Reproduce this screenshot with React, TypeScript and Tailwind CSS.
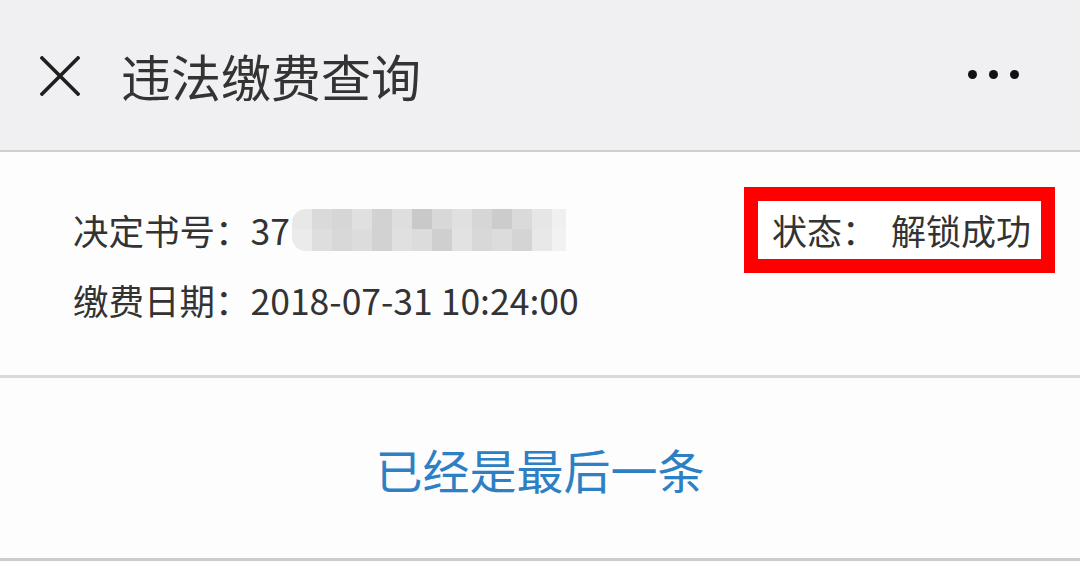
const font = { fontFamily: '"Noto Sans CJK SC", "Noto Sans", sans-serif' }

const mosaicTop = ['#e8e8e8', '#dadada', '#d6d6d6', '#e0e0e0', '#d2d2d2', '#dedede', '#c9c9c9', '#d8d8d8', '#e0e0e0', '#d6d6d6', '#cccccc', '#dadada', '#e6e6e6', '#f0f0f0']
const mosaicBottom = ['#ebebeb', '#dedede', '#d8d8d8', '#dcdcdc', '#d2d2d2', '#e0e0e0', '#dcdcdc', '#cfcfcf', '#e2e2e2', '#d8d8d8', '#dcdcdc', '#d4d4d4', '#e8e8e8', '#f2f2f2']

function Mosaic() {
  return (
    <div className="ml-[2px] flex h-[42px] w-[274px] flex-col overflow-hidden rounded-l-[14px]">
      <div className="flex h-[20px]">
        {mosaicTop.map((c, i) => (
          <div key={i} className="h-full w-[20px] shrink-0" style={{ background: c }} />
        ))}
      </div>
      <div className="flex h-[22px]">
        {mosaicBottom.map((c, i) => (
          <div key={i} className="h-full w-[20px] shrink-0" style={{ background: c }} />
        ))}
      </div>
    </div>
  )
}

export default function App() {
  return (
    <div className="h-[564px] w-[1080px] overflow-hidden bg-[#fefdfe] text-[#333333]" style={font}>
      {/* header */}
      <div className="flex h-[152px] items-center border-b-2 border-[#cfcfcf] bg-[#f0eff1] pl-[40px] pr-[61px]">
        <svg width="40" height="40" viewBox="0 0 40 40" className="mt-[1px]">
          <path d="M2 2 L38 38 M38 2 L2 38" stroke="#1f1f1f" strokeWidth="3.6" strokeLinecap="square" />
        </svg>
        <div className="ml-[41px] flex-1 text-[50px] leading-none text-[#333333]">违法缴费查询</div>
        <div className="flex items-center gap-[12px] pb-[2px]">
          <span className="h-[9px] w-[9px] rounded-full bg-[#111111]" />
          <span className="h-[9px] w-[9px] rounded-full bg-[#111111]" />
          <span className="h-[9px] w-[9px] rounded-full bg-[#111111]" />
        </div>
      </div>

      {/* record */}
      <div className="h-[226px] border-b-[3px] border-[#dadada] pl-[73px] pr-[25px] pt-[43px] text-[35.5px] leading-[70px]">
        <div className="flex items-center justify-between">
          <div className="flex items-center">
            <span>决定书号：37</span>
            <Mosaic />
          </div>
          <div className="-my-[8px] border-[14px] border-[#ff0000] bg-white py-[4px] pl-[14px] pr-[10px] text-[35px] leading-[50px]">
            状态：<span className="ml-[14px]">解锁成功</span>
          </div>
        </div>
        <div>缴费日期：2018-07-31 10:24:00</div>
      </div>

      {/* footer */}
      <div className="flex h-[183px] items-center justify-center border-b-[3px] border-[#cccccc]">
        <span className="text-[47px] leading-none text-[#2c80c3]">已经是最后一条</span>
      </div>
    </div>
  )
}
